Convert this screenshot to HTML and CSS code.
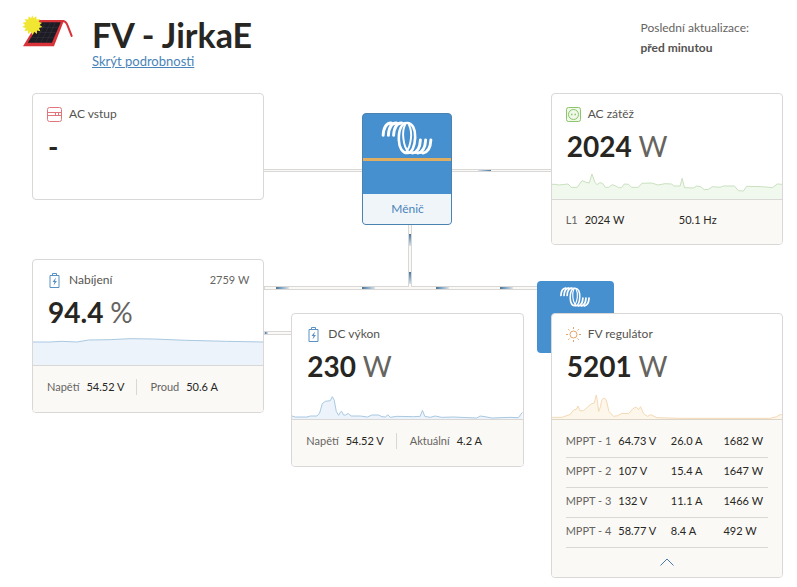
FILE: index.html
```html
<!DOCTYPE html>
<html lang="cs">
<head>
    <meta charset="UTF-8">
    <meta name="viewport" content="width=device-width, initial-scale=1.0">
    <title>FV - JirkaE</title>
    <link rel="stylesheet" href="styles.css">
</head>
<body>
    <!-- Sdílené symboly -->
    <svg class="symbols" aria-hidden="true">
        <symbol id="coil" viewBox="18 12 156 104">
            <g fill="none" stroke="#fff" stroke-width="9" stroke-linecap="round">
                <path d="M23 56C24 36 31 19 47 18"/>
                <path d="M39 56C40 36 47 19 63 18"/>
                <path d="M55 56C56 36 63 19 79 18"/>
                <path d="M169 70C168 90 161 107 145 110"/>
                <path d="M153 70C152 90 145 107 129 110"/>
                <path d="M137 70C136 90 129 107 113 110"/>
                <path d="M47 17H92M100 111H145" stroke-width="3"/>
                <path d="M71 70C70 40 79 18 96 18C113 18 122 38 121 62C120 90 111 110 97 110C82 110 72 94 71 70Z" stroke-width="8"/>
                <path d="M90 24C84 36 83 50 85 66C87 84 92 98 100 106M102 24C108 36 110 50 108 66C106 84 102 96 94 106" stroke-width="6"/>
            </g>
        </symbol>
        <symbol id="battery" viewBox="0 0 10 15">
            <path d="M.5 2.5h9v12h-9zM3 2.500V.5h4v2" fill="none" stroke="#5b90c2"/>
            <path d="M6.500 4.500 3 9h2l-1 3.500L7.500 8h-2z" fill="#5b90c2"/>
        </symbol>
    </svg>

    <header class="header">
        <svg class="logo" viewBox="0 0 150 93">
            <path d="M52 17H118Q129 17 133 28L146 61" fill="none" stroke="#d9333a" stroke-width="6" stroke-linecap="round"/>
            <path d="M50 14H124L94 91H3Z" fill="#d9333a"/>
            <path d="M54 21H114L88 81H17Z" fill="#1d1c24"/>
            <path d="M43 36H106M35 51H99M26 66H93M70 21 38 81M84 21 55 81M98 21 71 81" stroke="#45434f" stroke-width="1"/>
            <path d="M30 0l4 9 8-6 1 10 10-2-4 9 10 2-7 7 8 6-10 3 4 9-10-2v10l-8-6-5 9-5-9-8 6-1-10-10 2 4-9-10-3 8-6-7-7 10-2-4-9 10 2 2-10 7 6z" fill="#f1e733"/>
        </svg>
        <div class="heading">
            <h1>FV - JirkaE</h1>
            <a href="#dashboard">Skrýt podrobnosti</a>
        </div>
        <div class="updated">
            Poslední aktualizace:
            <strong>před minutou</strong>
        </div>
    </header>

    <main class="dashboard" id="dashboard">
        <!-- Propojení -->
        <div class="wire wire-ac"><i class="pulse pulse-ac"></i></div>
        <div class="wire wire-bus">
            <i class="pulse pulse-1"></i>
            <i class="pulse pulse-2"></i>
            <i class="pulse pulse-3"></i>
            <i class="pulse pulse-4"></i>
        </div>
        <div class="wire wire-dc"><i class="pulse pulse-dc"></i></div>
        <div class="wire wire-down">
            <i class="pulse pulse-top"></i>
            <i class="pulse pulse-bottom"></i>
        </div>

        <div class="column column-left">
            <section class="card">
                <div class="card-body">
                    <h2>
                        <svg class="icon" viewBox="0 0 15 15" fill="none" stroke="#e0767b">
                            <rect x=".5" y=".5" width="14" height="14" rx="2"/>
                            <path d="M1 5.500h13M1 8.500h13M8.500 5.500v3M11.500 5.500v3"/>
                        </svg>
                        AC vstup
                    </h2>
                    <p class="value">-</p>
                </div>
            </section>

            <section class="card">
                <div class="card-body">
                    <h2>
                        <svg class="icon"><use href="#battery"/></svg>
                        Nabíjení
                        <span class="power">2759 W</span>
                    </h2>
                    <p class="value">94.4 <span>%</span></p>
                    <svg class="chart blue" viewBox="0 0 692 108" preserveAspectRatio="none">
                        <path class="area" d="M0 39 50 39 87 37 132 39 167 33 232 32 292 29 362 30 462 34 582 37 692 39V108H0Z"/>
                        <path class="line" d="M0 39 50 39 87 37 132 39 167 33 232 32 292 29 362 30 462 34 582 37 692 39"/>
                    </svg>
                </div>
                <dl class="card-footer">
                    <div><dt>Napětí</dt><dd>54.52 V</dd></div>
                    <div><dt>Proud</dt><dd>50.6 A</dd></div>
                </dl>
            </section>
        </div>

        <div class="column column-middle">
            <section class="inverter">
                <div class="inverter-top">
                    <svg class="coil"><use href="#coil"/></svg>
                </div>
                <div class="inverter-face"></div>
                <h2>Měnič</h2>
            </section>

            <section class="card">
                <div class="card-body">
                    <h2>
                        <svg class="icon"><use href="#battery"/></svg>
                        DC výkon
                    </h2>
                    <p class="value">230 <span>W</span></p>
                    <svg class="chart blue" viewBox="0 0 692 108" preserveAspectRatio="none">
                        <path class="area" d="M0 99 10 102 45 102 55 99 75 99 83 90 91 62 100 55 115 53 121 41 127 52 133 85 140 97 145 88 149 85 155 96 161 96 169 91 177 99 205 99 227 102 240 96 260 96 270 101 281 102 288 95 295 103 315 100 365 101 385 100 392 82 399 100 415 103 430 99 450 103 485 102 555 105 565 99 580 101 600 105 655 103 680 104 692 88V108H0Z"/>
                        <path class="line" d="M0 99 10 102 45 102 55 99 75 99 83 90 91 62 100 55 115 53 121 41 127 52 133 85 140 97 145 88 149 85 155 96 161 96 169 91 177 99 205 99 227 102 240 96 260 96 270 101 281 102 288 95 295 103 315 100 365 101 385 100 392 82 399 100 415 103 430 99 450 103 485 102 555 105 565 99 580 101 600 105 655 103 680 104 692 88"/>
                    </svg>
                </div>
                <dl class="card-footer">
                    <div><dt>Napětí</dt><dd>54.52 V</dd></div>
                    <div><dt>Aktuální</dt><dd>4.2 A</dd></div>
                </dl>
            </section>
        </div>

        <div class="column column-right">
            <section class="card">
                <div class="card-body">
                    <h2>
                        <svg class="icon" viewBox="0 0 15 15" fill="none" stroke="#8cc56a">
                            <rect x=".5" y=".5" width="14" height="14" rx="2" fill="#eff8e9"/>
                            <circle cx="7.5" cy="7.5" r="5"/>
                            <path d="M5 7.500h1.500M8.500 7.500H10" stroke-width="1.500"/>
                        </svg>
                        AC zátěž
                    </h2>
                    <p class="value">2024 <span>W</span></p>
                    <svg class="chart green" viewBox="0 0 692 108" preserveAspectRatio="none">
                        <path class="area" d="M0 64 12 64 20 66 48 63 58 73 76 73 90 53 100 57 112 60 120 33 129 58 135 65 144 59 152 61 160 73 170 73 181 65 192 69 200 74 209 74 217 63 230 64 239 73 259 73 270 61 300 60 318 66 340 62 360 63 366 69 385 69 391 46 398 74 425 75 435 69 447 71 457 80 470 79 482 71 505 73 515 69 548 69 560 83 575 84 585 70 630 71 662 74 677 63 692 64V108H0Z"/>
                        <path class="line" d="M0 64 12 64 20 66 48 63 58 73 76 73 90 53 100 57 112 60 120 33 129 58 135 65 144 59 152 61 160 73 170 73 181 65 192 69 200 74 209 74 217 63 230 64 239 73 259 73 270 61 300 60 318 66 340 62 360 63 366 69 385 69 391 46 398 74 425 75 435 69 447 71 457 80 470 79 482 71 505 73 515 69 548 69 560 83 575 84 585 70 630 71 662 74 677 63 692 64"/>
                    </svg>
                </div>
                <dl class="card-footer phases">
                    <div><dt>L1</dt><dd>2024 W</dd></div>
                    <div><dd>50.1 Hz</dd></div>
                </dl>
            </section>

            <div class="solar">
                <div class="charger">
                    <svg class="coil"><use href="#coil"/></svg>
                </div>
                <section class="card">
                    <div class="card-body">
                        <h2>
                            <svg class="icon" viewBox="0 0 15 15" fill="none" stroke="#e2a568">
                                <circle cx="7.5" cy="7.5" r="3.500"/>
                                <path d="M7.500 0v2M7.500 13v2M0 7.500h2M13 7.500h2M2.200 2.200l1.300 1.300M11.500 11.500l1.300 1.300M2.200 12.800l1.300-1.300M11.500 3.500l1.300-1.300"/>
                            </svg>
                            FV regulátor
                        </h2>
                        <p class="value">5201 <span>W</span></p>
                        <svg class="chart orange" viewBox="0 0 692 108" preserveAspectRatio="none">
                            <path class="area" d="M0 103 30 103 55 94 65 81 73 79 78 69 84 83 95 83 107 72 117 63 127 60 133 36 136 50 140 86 146 70 149 52 155 45 163 50 171 85 185 100 197 98 210 91 230 92 243 77 253 72 260 80 266 71 275 92 287 100 297 95 315 104 385 106 655 106 675 101 685 95 692 95V108H0Z"/>
                            <path class="line" d="M0 103 30 103 55 94 65 81 73 79 78 69 84 83 95 83 107 72 117 63 127 60 133 36 136 50 140 86 146 70 149 52 155 45 163 50 171 85 185 100 197 98 210 91 230 92 243 77 253 72 260 80 266 71 275 92 287 100 297 95 315 104 385 106 655 106 675 101 685 95 692 95"/>
                        </svg>
                    </div>
                    <div class="trackers">
                        <table>
                            <tr><th scope="row">MPPT - 1</th><td>64.73 V</td><td>26.0 A</td><td>1682 W</td></tr>
                            <tr><th scope="row">MPPT - 2</th><td>107 V</td><td>15.4 A</td><td>1647 W</td></tr>
                            <tr><th scope="row">MPPT - 3</th><td>132 V</td><td>11.1 A</td><td>1466 W</td></tr>
                            <tr><th scope="row">MPPT - 4</th><td>58.77 V</td><td>8.4 A</td><td>492 W</td></tr>
                        </table>
                        <button type="button" class="collapse" aria-label="Sbalit">
                            <svg viewBox="0 0 14 8"><path d="M.5 7.500 7 1l6.500 6.500" fill="none" stroke="#4a78b0"/></svg>
                        </button>
                    </div>
                </section>
            </div>
        </div>
    </main>
</body>
</html>
```
FILE: styles.css
```css
/* Obecné styly */
* {
    box-sizing: border-box;
}

body {
    margin: 0;
    font-family: Lato, "Noto Sans", sans-serif;
    font-size: 12px;
    line-height: 16px;
    color: #272622;
    background-color: #fff;
}

h1,
h2,
p,
dl,
dd {
    margin: 0;
}

.symbols {
    position: absolute;
    width: 0;
    height: 0;
}

/* Hlavička */
.header {
    display: flex;
    align-items: flex-start;
    padding: 15px 48px 0 22px;
}

.logo {
    width: 51px;
    height: 32px;
    margin-right: 19px;
}

.heading h1 {
    font-size: 34px;
    line-height: 39px;
    font-weight: bold;
}

.heading a {
    display: block;
    font-size: 13px;
    line-height: 14px;
    color: #4a84b8;
}

.updated {
    margin-left: auto;
    padding-top: 3px;
    line-height: 20px;
    color: #66645f;
}

.updated strong {
    display: block;
    color: #55534f;
}

/* Přehled */
.dashboard {
    position: relative;
    display: grid;
    grid-template-columns: repeat(3, 1fr);
    gap: 27px;
    padding: 25px 14px 9px 32px;
}

.column {
    position: relative;
    display: flex;
    flex-direction: column;
}

.column-left {
    gap: 59px;
}

.column-middle {
    gap: 88px;
    padding-top: 20px;
}

.column-right {
    gap: 68px;
}

/* Karty */
.card {
    position: relative;
    border: 1px solid #d9d8d6;
    border-radius: 4px;
    background-color: #fff;
    overflow: hidden;
}

.card-body {
    display: flex;
    flex-direction: column;
    height: 105px;
}

.card h2 {
    display: flex;
    align-items: center;
    margin: 12px 14px 0;
    font-size: 12px;
    line-height: 16px;
    font-weight: normal;
    color: #55534f;
}

.icon {
    width: 15px;
    height: 15px;
    margin-right: 7px;
}

.power {
    margin-left: auto;
    font-size: 11px;
    color: #66645f;
}

.value {
    margin: 7px 15px 0;
    font-size: 28px;
    line-height: 34px;
    font-weight: bold;
}

.value span {
    font-weight: normal;
    color: #66645f;
}

/* Grafy */
.chart {
    display: block;
    width: 100%;
    height: 36px;
    margin-top: auto;
}

.chart .line {
    fill: none;
    stroke-width: 1;
    vector-effect: non-scaling-stroke;
}

.blue .area { fill: #ecf3fa; }
.blue .line { stroke: #a9c8e0; }
.green .area { fill: #f1f8ee; }
.green .line { stroke: #c9e0bf; }
.orange .area { fill: #fdf6ea; }
.orange .line { stroke: #f3d9b5; }

/* Patička karty */
.card-footer {
    display: flex;
    align-items: center;
    height: 47px;
    padding: 0 14px 4px;
    border-top: 1px solid #d9d8d6;
    font-size: 11px;
    background-color: #faf9f6;
}

.card-footer div {
    display: flex;
    gap: 7px;
}

.card-footer div + div {
    margin-left: 12px;
    padding-left: 13px;
    border-left: 1px solid #d9d8d6;
}

.card-footer dt {
    color: #66645f;
}

.card-footer.phases {
    height: 45px;
}

.phases div {
    flex: none;
    width: 50%;
}

.card-footer.phases div + div {
    width: auto;
    padding-left: 0;
    border-left: 0;
}

/* Měnič */
.inverter {
    position: relative;
    align-self: center;
    width: 90px;
    border: 1px solid #4a82b0;
    border-radius: 4px;
    background-color: #4790d0;
    overflow: hidden;
}

.inverter-top {
    height: 47px;
    padding-top: 7px;
    border-bottom: 3px solid #dfae62;
    text-align: center;
}

.inverter-top .coil {
    width: 52px;
    height: 34px;
}

.inverter-face {
    height: 33px;
}

.inverter h2 {
    height: 30px;
    font-size: 12px;
    line-height: 30px;
    font-weight: normal;
    text-align: center;
    color: #4a84b8;
    background-color: #f0f5fa;
}

/* Solární regulátor */
.solar {
    position: relative;
}

.charger {
    position: absolute;
    top: -32px;
    left: -14px;
    width: 77px;
    height: 72px;
    padding-top: 6px;
    border-radius: 4px;
    text-align: center;
    background-color: #4790d0;
}

.charger .coil {
    width: 30px;
    height: 20px;
}

.trackers {
    padding: 7px 14px 5px;
    border-top: 1px solid #ddd5c8;
    background-color: #faf9f6;
}

.trackers table {
    width: 100%;
    table-layout: fixed;
    border-collapse: collapse;
    font-size: 11px;
}

.trackers th,
.trackers td {
    width: 26%;
    height: 30px;
    padding: 0 0 2px;
    border-bottom: 1px solid #d9d8d6;
    text-align: left;
}

.trackers td:last-child {
    width: 22%;
}

.trackers th {
    font-weight: normal;
    color: #66645f;
}

.collapse {
    display: block;
    width: 100%;
    padding: 10px 0 6px;
    border: 0;
    background: none;
    cursor: pointer;
}

.collapse svg {
    display: block;
    width: 14px;
    height: 8px;
    margin: 0 auto;
}

/* Vodiče */
.wire {
    position: absolute;
    border: 1px solid #d9d8d6;
    background-color: #faf9f6;
}

.wire-ac {
    top: 101px;
    left: 25%;
    right: 25%;
    height: 3px;
}

.wire-bus {
    top: 218px;
    left: 264px;
    right: 255px;
    height: 4px;
}

.wire-dc {
    top: 263px;
    left: 264px;
    width: 40px;
    height: 4px;
}

.wire-down {
    top: 150px;
    left: 408px;
    width: 4px;
    height: 69px;
    border-bottom: 0;
}

.pulse {
    position: absolute;
    top: 0;
    width: 13px;
    height: 2px;
    background: linear-gradient(to right, #44779f, #d5e3ee);
}

.pulse-1 { left: 4%; }
.pulse-2 { left: 35%; }
.pulse-3 { left: 62%; }
.pulse-4 { left: 85%; }

.pulse-ac {
    left: 70%;
    height: 1px;
    background: linear-gradient(to left, #44779f, #d5e3ee);
}

.pulse-dc {
    left: 0;
    width: 3px;
}

.pulse-top,
.pulse-bottom {
    width: 2px;
    height: 12px;
    background: linear-gradient(#44779f, #d5e3ee);
}

.pulse-top { top: 15px; }
.pulse-bottom { top: 53px; }
```
